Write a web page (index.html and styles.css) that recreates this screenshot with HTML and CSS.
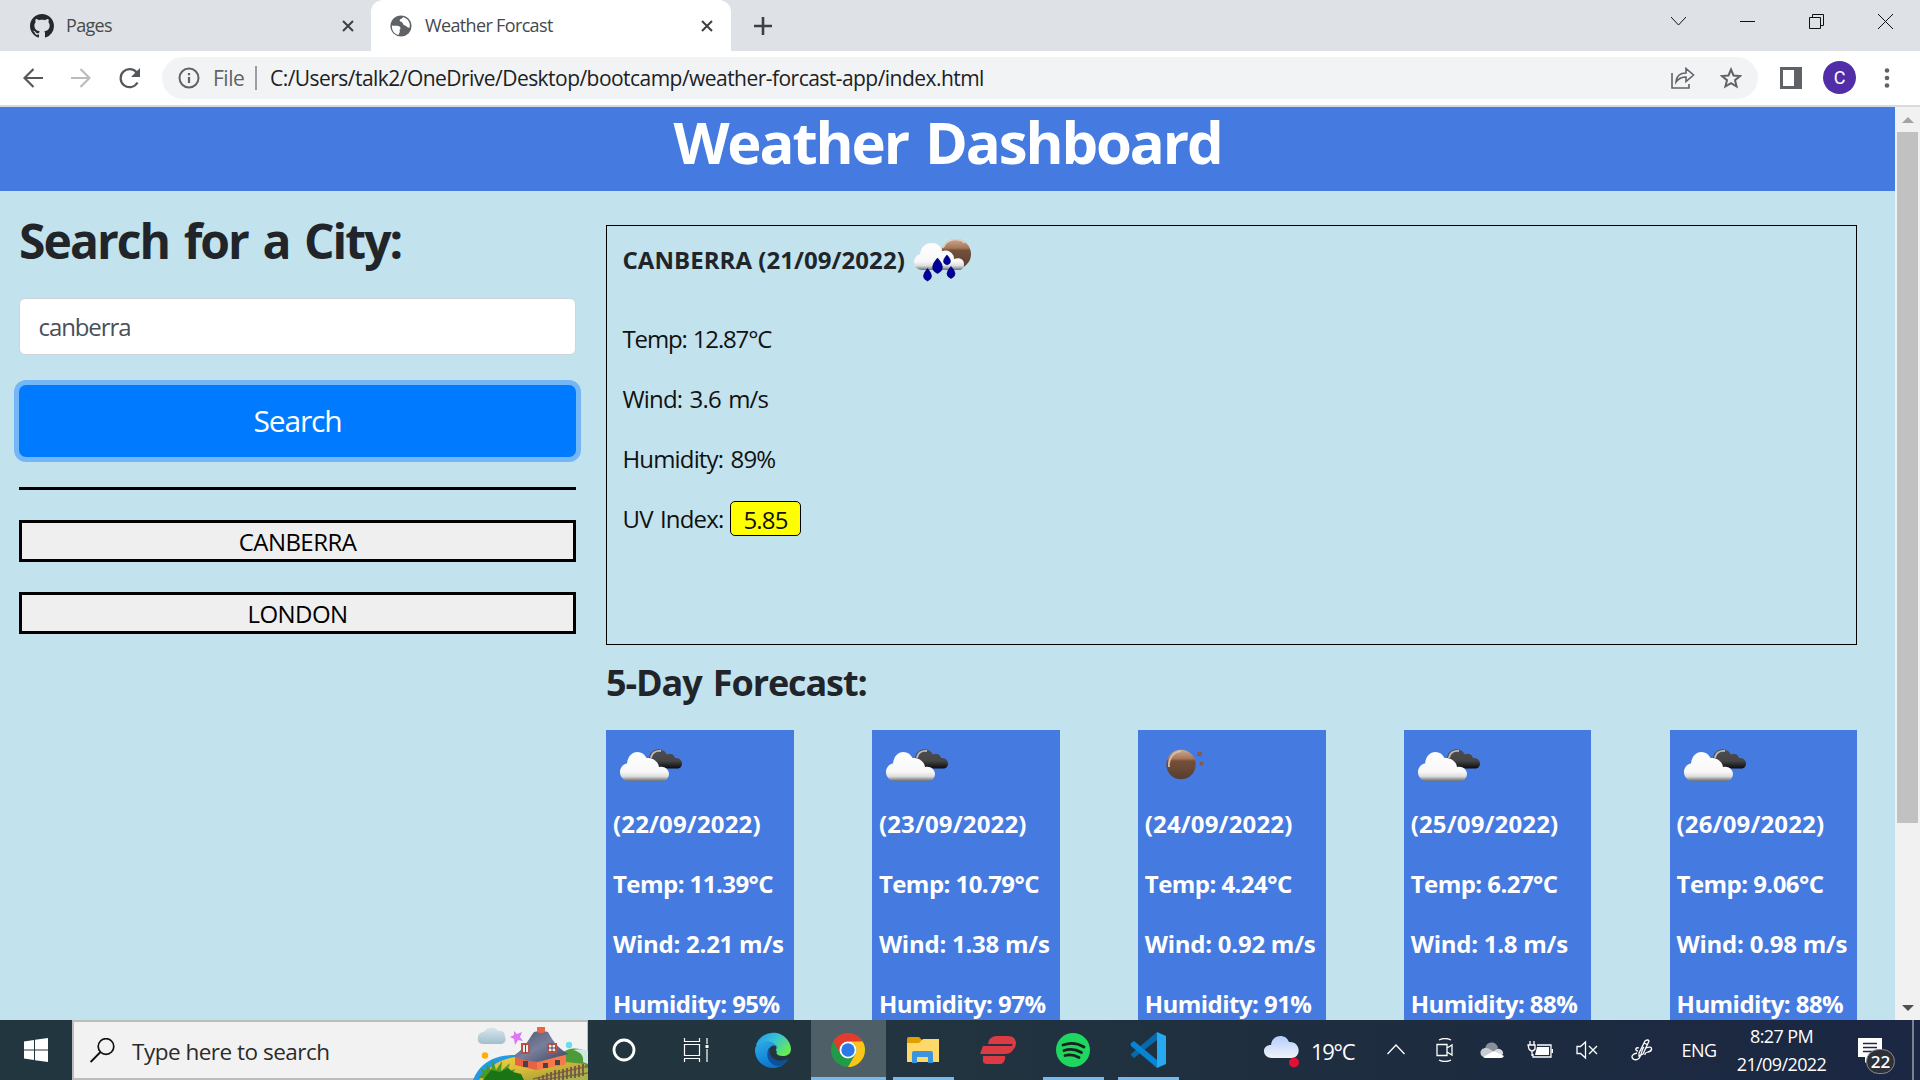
FILE: index.html
```html
<!DOCTYPE html>
<html lang="en">
<head>
<meta charset="utf-8">
<title>Weather Forcast</title>
<link rel="stylesheet" href="styles.css">
</head>
<body>
<svg class="defs" width="0" height="0" aria-hidden="true">
  <defs>
    <linearGradient id="white-cloud" x1="0" y1="0" x2="0" y2="1"><stop offset="0" stop-color="#fff"/><stop offset=".68" stop-color="#f8f8f8"/><stop offset=".84" stop-color="#dedede"/><stop offset="1" stop-color="#6b7077"/></linearGradient>
    <linearGradient id="dark-cloud" x1="0" y1="0" x2="0" y2="1"><stop offset="0" stop-color="#4d4d50"/><stop offset=".6" stop-color="#454547"/><stop offset="1" stop-color="#0c0c0e"/></linearGradient>
    <linearGradient id="moon" x1="0" y1="0" x2="0" y2="1"><stop offset="0" stop-color="#c9aa97"/><stop offset=".3" stop-color="#a87657"/><stop offset=".38" stop-color="#75503a"/><stop offset="1" stop-color="#573d31"/></linearGradient>
    <symbol id="clouds" viewBox="0 0 75 75">
      <path d="M36 33a9 9 0 0 1 17-8.500c3-1.500 7-.3 8 3.500 4-.5 7 2 7 5.500 0 3-2 5-5 5H42z" fill="url(#dark-cloud)"/>
      <path d="M37 28c.5-5 5-8 10-7" fill="none" stroke="#b9b9b9" stroke-width="1.800"/>
      <path d="M13 51c-4-1-7-4.500-7-9 0-4 3-8 7-8.500C14 26 18 22 23.500 22c4 0 7 2 9 6 7-.5 12 4 12.500 9 5-1.500 10 2 10 7 0 3-2 6-5 7z" fill="url(#white-cloud)"/>
    </symbol>
    <symbol id="clear-night" viewBox="0 0 75 75">
      <circle cx="35" cy="34.500" r="14.700" fill="url(#moon)"/>
      <path d="M23 37c-1-8 4-15 12-16" fill="none" stroke="#d8bba9" stroke-width="1.800"/>
      <path d="M51.500 22l2 1 2-1-.8 2 .8 2-2-.8-2 .8.800-2zM54 32l1.500.5 1.500-.5-.5 1.500.5 1.500-1.500-.5-1.500.5.5-1.500z" fill="#86594a" stroke="#86594a"/>
    </symbol>
    <symbol id="close" viewBox="0 0 12 12"><path d="M1 1l10 10M11 1L1 11" fill="none" stroke="#3c4043" stroke-width="2"/></symbol>
  </defs>
</svg>

<div class="screen">
  <header class="tabs">
    <div class="tab">
      <svg class="github" width="24" height="24" viewBox="0 0 16 16"><path fill="#24292e" d="M8 0C3.580 0 0 3.580 0 8c0 3.540 2.290 6.530 5.470 7.590.4.070.55-.17.55-.38 0-.19-.01-.82-.01-1.490-2.010.37-2.530-.49-2.690-.94-.09-.23-.48-.94-.82-1.130-.28-.15-.68-.52-.01-.53.63-.01 1.080.58 1.230.82.72 1.210 1.870.87 2.330.66.07-.52.28-.87.51-1.070-1.780-.2-3.640-.89-3.640-3.950 0-.87.31-1.590.82-2.150-.08-.2-.36-1.020.08-2.120 0 0 .67-.21 2.200.82.64-.18 1.320-.27 2-.27s1.360.09 2 .27c1.530-1.040 2.200-.82 2.200-.82.44 1.100.16 1.920.08 2.120.51.56.82 1.270.82 2.150 0 3.070-1.870 3.750-3.650 3.950.29.25.54.73.54 1.480 0 1.070-.01 1.930-.01 2.200 0 .21.15.46.55.38A8 8 0 0 0 16 8c0-4.420-3.580-8-8-8z"/></svg>
      <span class="tab-title pages">Pages</span>
      <svg width="12" height="12"><use href="#close"/></svg>
    </div>
    <div class="tab active">
      <svg width="22" height="22" viewBox="0 0 22 22"><circle cx="11" cy="11" r="10.600" fill="#5f6368"/><path d="M2 10.500c2 .8 6.500-.5 8 1.500 1.500 2-.8 2.500-.3 4 .6 1.500-.8 2-1.200 4C4 19 1.500 15 2 10.500zM13 2c-.3 2-3 1.500-3.300 3.300-.3 1.500 2.800 1.300 3 3 .3 1.800 2 1.800 3.300 2.700 1.600 1 2 2 3.500 1.700C21 8 18 3.500 13 2z" fill="#fff"/></svg>
      <span class="tab-title forcast">Weather Forcast</span>
      <svg width="12" height="12"><use href="#close"/></svg>
    </div>
    <svg class="new-tab" width="18" height="18" viewBox="0 0 18 18"><path d="M9 0v18M0 9h18" stroke="#3c4043" stroke-width="2.600"/></svg>
    <div class="window-controls">
      <svg width="15" height="15" viewBox="0 0 15 15"><path d="M0 3l7.500 8L15 3"/></svg>
      <svg width="15" height="15" viewBox="0 0 15 15"><path d="M0 7.500h15"/></svg>
      <svg width="15" height="15" viewBox="0 0 15 15"><path d="M.5 3.500h11v11H.5zM3.500 3.500v-3h11v11h-3"/></svg>
      <svg width="15" height="15" viewBox="0 0 15 15"><path d="M0 0l15 15M15 0L0 15"/></svg>
    </div>
  </header>

  <div class="toolbar">
    <svg class="nav" width="20" height="20" viewBox="0 0 20 20"><path d="M20 10H2M10.500 1L1.500 10l9 9"/></svg>
    <svg class="nav faded" width="20" height="20" viewBox="0 0 20 20"><path d="M0 10h18M9.500 1l9 9-9 9"/></svg>
    <svg class="nav" width="22" height="22" viewBox="0 0 22 22"><path d="M18.500 15.500A9 9 0 1 1 18 6"/><path class="solid" d="M21 1v9h-9z"/></svg>
    <div class="address">
      <svg width="22" height="22" viewBox="0 0 22 22"><circle cx="11" cy="11" r="9.500" fill="none" stroke="#5f6368" stroke-width="2"/><path d="M11 10v6M11 6v2.300" stroke="#5f6368" stroke-width="2.200"/></svg>
      <span class="scheme">File</span>
      <span class="divider"></span>
      <span class="url">C:/Users/talk2/OneDrive/Desktop/bootcamp/weather-forcast-app/index.html</span>
      <svg class="share" width="24" height="22" viewBox="0 0 24 22"><path d="M1 6v15h17v-4M5 15c.5-6 4-9 10-9V1.500l7.500 6.500-7.500 6.500V10c-5 0-7.500 1.500-10 5z" fill="none" stroke="#5f6368" stroke-width="1.600"/></svg>
      <svg width="22" height="22" viewBox="0 0 22 22"><path d="M11 2.500l2.500 6 6.500.5-5 4.200 1.600 6.300L11 16.200l-5.600 3.300L7 13.200 2 9l6.500-.5z" fill="none" stroke="#5f6368" stroke-width="2"/></svg>
    </div>
    <svg class="side-panel" width="22" height="22" viewBox="0 0 22 22"><path d="M0 0h22v22H0zM3 3v16h11V3z" fill="#5f6368" fill-rule="evenodd"/></svg>
    <span class="avatar">C</span>
    <svg width="6" height="22" viewBox="0 0 6 22"><g fill="#5f6368"><circle cx="3" cy="3.500" r="2.300"/><circle cx="3" cy="11" r="2.300"/><circle cx="3" cy="18.500" r="2.300"/></g></svg>
  </div>

  <div class="viewport">
    <main class="page">
      <h1 class="banner">Weather Dashboard</h1>
      <div class="columns">
        <aside class="sidebar">
          <h2 class="search-title">Search for a City:</h2>
          <div class="city-input"><span>canberra</span></div>
          <button class="search-button"><span>Search</span></button>
          <div class="rule"></div>
          <button class="history"><span>CANBERRA</span></button>
          <button class="history"><span>LONDON</span></button>
        </aside>
        <section class="results">
          <div class="current">
            <div class="current-title">
              <span>CANBERRA (21/09/2022)</span>
              <svg width="60" height="44" viewBox="0 0 60 44">
                <circle cx="43" cy="16" r="15" fill="url(#moon)"/>
                <path d="M30 10c4-9 15-11 22-5" fill="none" stroke="#e0d0c4" stroke-width="1.500"/>
                <path d="M9 32c-5 0-8-4-8-8s3-7 6-8C8 9 12 5 19 5c5 0 9 3 10 8 5-2 12 1 12 8 5-2 10 0 10 5 0 4-2 6-5 6z" fill="url(#white-cloud)"/>
                <g fill="#00009d" stroke="#000060" stroke-width=".6"><path d="M24.500 20q10 11 0 15.500-10-4.500 0-15.500zM34 17q7 7.500 0 10-7-2.500 0-10zM14.500 30.500q8 9 0 12.500-8-3.500 0-12.500zM38 28.500q8 8.500 0 12-8-3.500 0-12z"/></g>
              </svg>
            </div>
            <p class="reading now-temp">Temp: 12.87°C</p>
            <p class="reading">Wind: 3.6 m/s</p>
            <p class="reading">Humidity: 89%</p>
            <p class="reading uv-row"><span class="uv-label">UV Index:</span><span class="uv">5.85</span></p>
          </div>
          <h2 class="forecast-title">5-Day Forecast:</h2>
          <div class="forecast">
            <article class="day">
              <svg width="75" height="75"><use href="#clouds"/></svg>
              <p class="date">(22/09/2022)</p><p class="temp">Temp: 11.39°C</p><p class="wind">Wind: 2.21 m/s</p><p class="humidity">Humidity: 95%</p>
            </article>
            <article class="day">
              <svg width="75" height="75"><use href="#clouds"/></svg>
              <p class="date">(23/09/2022)</p><p class="temp">Temp: 10.79°C</p><p class="wind">Wind: 1.38 m/s</p><p class="humidity">Humidity: 97%</p>
            </article>
            <article class="day">
              <svg width="75" height="75"><use href="#clear-night"/></svg>
              <p class="date">(24/09/2022)</p><p class="temp">Temp: 4.24°C</p><p class="wind">Wind: 0.92 m/s</p><p class="humidity">Humidity: 91%</p>
            </article>
            <article class="day">
              <svg width="75" height="75"><use href="#clouds"/></svg>
              <p class="date">(25/09/2022)</p><p class="temp">Temp: 6.27°C</p><p class="wind">Wind: 1.8 m/s</p><p class="humidity">Humidity: 88%</p>
            </article>
            <article class="day">
              <svg width="75" height="75"><use href="#clouds"/></svg>
              <p class="date">(26/09/2022)</p><p class="temp">Temp: 9.06°C</p><p class="wind">Wind: 0.98 m/s</p><p class="humidity">Humidity: 88%</p>
            </article>
          </div>
        </section>
      </div>
    </main>
    <div class="scrollbar">
      <svg width="12" height="6" viewBox="0 0 12 6"><path d="M0 6l6-6 6 6z" fill="#a3a3a3"/></svg>
      <div class="thumb"></div>
      <svg class="down" width="12" height="6" viewBox="0 0 12 6"><path d="M0 0l6 6 6-6z" fill="#505050"/></svg>
    </div>
  </div>

  <footer class="taskbar">
    <div class="start"><svg width="24" height="24" viewBox="0 0 24 24"><path d="M0 3.500l10-1.600v9.600H0zM11 1.700L24 0v11.500H11zM0 12.500h10v9.600l-10-1.600zM11 12.500h13V24l-13-1.800z" fill="#fff"/></svg></div>
    <div class="search-box">
      <svg width="25" height="25" viewBox="0 0 25 25"><circle cx="16" cy="8.500" r="7.800" fill="none" stroke="#111" stroke-width="1.700"/><path d="M10.500 14L.6 24" stroke="#111" stroke-width="1.900"/></svg>
      <span class="search-hint">Type here to search</span>
      <svg class="cottage" width="115" height="54" viewBox="0 0 115 54">
        <defs>
          <linearGradient id="roof" x1="0" y1="0" x2="1" y2="1"><stop offset="0" stop-color="#50546f"/><stop offset=".5" stop-color="#777f9c"/><stop offset="1" stop-color="#3f435e"/></linearGradient>
          <linearGradient id="field" x1="0" y1="0" x2="1" y2="1"><stop offset="0" stop-color="#f0d53f"/><stop offset=".5" stop-color="#d9b738"/><stop offset="1" stop-color="#7d9a35"/></linearGradient>
          <linearGradient id="sky-cloud" x1="0" y1="0" x2="0" y2="1"><stop offset="0" stop-color="#d8e6ed"/><stop offset="1" stop-color="#a1bfcd"/></linearGradient>
        </defs>
        <path d="M0 54c6-15 18-25 42-25l8 10-40 15z" fill="#239ae6"/>
        <path d="M88 28c8-8 19-6 27-2v28H70z" fill="#4d9a3b"/>
        <path d="M100 24c8 2 11 6 10 12l5 2V25q-8-3-15-1z" fill="#cce9df"/>
        <path d="M6 54c9-13 19-20 36-23l70 7 3 16z" fill="url(#field)"/>
        <path d="M76 50l39-8v12H58z" fill="#a9b448"/>
        <path d="M5 52l5-5-3-5 6 3 1-7 4 6 2-10 3 10 6-9-1 10 9-8-3 9 8-3-2 5 9 2-1 4z" fill="#4c9a25"/>
        <path d="M10 54l8-10 9 2 8-4 5 4 8 2 3 6z" fill="#1b7413"/>
        <path d="M10 18c-4 0-6-3-5-7 0-3 3-5 6-5 2-5 12-6 14-1 5-1 7 2 7 6 2 4-1 7-4 7z" fill="url(#sky-cloud)"/>
        <path d="M41 5l3 3 5-2-2 5 3 4-5-1-3 5-1-6-4-2 4-2z" fill="#dd78f3"/>
        <circle cx="12" cy="29.500" r="3.200" fill="#ffae00"/><circle cx="96" cy="19" r="3.200" fill="#6cdce8"/>
        <path d="M42 31l22 3 29-5v9l-30 6-21-5z" fill="#e66345"/><path d="M64 35l29-6v9l-29 6z" fill="#f5794b"/>
        <path d="M61 6q7-2 14 0c4 7 8 15 20 22q-15 4-30 8-14-1-25-6C51 24 55 14 61 6z" fill="url(#roof)"/>
        <path d="M64 1h8v5q-4 2-8 0z" fill="#ed6643"/>
        <path d="M49 18h7v9h-7zM75 18h8v8h-8z" fill="#eee" stroke="#bb5144" stroke-width="2"/><path d="M52.500 18v9M79 18v8M75 22h8" stroke="#54465c"/>
        <path d="M50 35h5v6h-5zM70 37h5v5h-5zM82 34h5v5h-5z" fill="#4d3f43"/>
        <path d="M60 53l55-13M61 55l54-8" stroke="#8b6747" stroke-width="1.500"/>
        <path d="M66 54v-3m4 3v-5m4 5v-7m4 7v-8m4 8V44m4 10V44m4 10V43m4 10V42m4 10V41m4 11V40m4 11V39m4 11V38" stroke="#765547" stroke-width="1.800"/>
      </svg>
    </div>
    <div class="app cortana"><svg width="24" height="24" viewBox="0 0 24 24"><circle cx="12" cy="12" r="10" fill="none" stroke="#fff" stroke-width="2.800"/></svg></div>
    <div class="app task-view"><svg width="26" height="24" viewBox="0 0 26 24"><path d="M1.500 0v3.500h15V0M1.500 6.500h15v11h-15zM1.500 24v-3.500h15V24M24 0v6M24 11v13" fill="none" stroke="#fff" stroke-width="1.200"/><path d="M22.500 7h3v3h-3z" fill="#fff"/></svg></div>
    <div class="app">
      <svg width="36" height="36" viewBox="0 0 36 36">
        <defs><linearGradient id="edge-top" x1="0" y1="0" x2="1" y2=".6"><stop stop-color="#2295e6"/><stop offset=".5" stop-color="#35c1d8"/><stop offset="1" stop-color="#68ea54"/></linearGradient><linearGradient id="edge-side" x1="0" y1="0" x2=".6" y2="1"><stop stop-color="#31aee8"/><stop offset="1" stop-color="#0670cc"/></linearGradient></defs>
        <path d="M1 13A18 18 0 0 1 36 17c0 5-4 7.500-9 7-6-.5-6-3-5-5z" fill="url(#edge-top)"/>
        <path d="M0 17C2 7 18 6 23 16c-6-4-10 1-8 7 2 7 11 8 18 4-4 7-10 9-15 9C8 36-.5 28 0 17z" fill="url(#edge-side)"/>
        <path d="M14 16c-5 9 2 19 11 18 4-2 7-4 8-7-6 3-14 2-17-3-2-3-1-7 1-9z" fill="#124f98"/>
        <path d="M16 14.500c4-2.500 6 0 5.500 2-1 2.500-2 4.500 1 6.500-3 .5-7-1-8-4q-.5-3 1.500-4.500z" fill="#22363f"/>
      </svg>
    </div>
    <div class="app open current-app">
      <svg width="34" height="34" viewBox="0 0 34 34"><circle cx="17" cy="17" r="17" fill="#229b49"/><path d="M2.300 8.500A17 17 0 0 1 31.700 8.500H17A8.500 8.500 0 0 0 9.600 21.200z" fill="#e33b2e"/><path d="M31.700 8.500A17 17 0 0 1 17 34l7.400-12.800A8.500 8.500 0 0 0 17 8.500z" fill="#fdc519"/><circle cx="17" cy="17" r="8.500" fill="#fff"/><circle cx="17" cy="17" r="6.700" fill="#2c78e8"/></svg>
    </div>
    <div class="app open"><svg width="32" height="27" viewBox="0 0 32 27"><path d="M0 2q0-2 2-2h10l3 3v3H0z" fill="#dfa000"/><path d="M0 6h12l4-4h16v23H0z" fill="#ffd86a"/><path d="M5 26V16q0-2 2-2h17q2 0 2 2v10h-5v-6H10v6z" fill="#3b94df"/></svg></div>
    <div class="app"><svg width="36" height="28" viewBox="0 0 36 28"><path d="M9 4q3-4 8-4h11c9 0 10 9 5 14-2 3-5 4-8 4H0l3-8h28c2 0 2-2 0-2H8zM3 20h21q2 0 1 3-1 5-5 5H7q-5 0-4-5z" fill="#dc3b43"/></svg></div>
    <div class="app open"><svg width="34" height="34" viewBox="0 0 34 34"><circle cx="17" cy="17" r="17" fill="#1fd760"/><path d="M7 12q11-4 21 2M8 17.500q9-3 17.500 2M9 22.500q7-2 14 2" fill="none" stroke="#17221b" stroke-width="2.800" stroke-linecap="round"/></svg></div>
    <div class="app open"><svg width="36" height="36" viewBox="0 0 36 36"><path d="M1 23l3 3 23-18V0L1 22q-1 .5 0 1z" fill="#0869ad"/><path d="M1 11l3-2 23 19v8L1 14q-1-2 0-3z" fill="#0784d3"/><path d="M27 0l9 4v28l-9 4z" fill="#27a9f2"/></svg></div>

    <div class="tray">
      <div class="weather">
        <svg width="38" height="36" viewBox="0 0 38 36"><defs><linearGradient id="tray-cloud" x1="0" y1="0" x2="0" y2="1"><stop stop-color="#b3cdfa"/><stop offset="1" stop-color="#f0f3f8"/></linearGradient></defs><path d="M8 26c-10 0-11-13-1-13C8 2 22 1 25 10c12-1 13 16 2 16z" fill="url(#tray-cloud)"/><circle cx="30" cy="30.500" r="5" fill="#df1235"/></svg>
        <span class="degrees">19°C</span>
      </div>
      <div class="cell"><svg width="18" height="18" viewBox="0 0 18 18"><path d="M.5 13L9 4l8.500 9"/></svg></div>
      <div class="cell camera"><svg width="18" height="24" viewBox="0 0 18 24"><path d="M3 2q6-3 12 0M3 22q6 3 12 0M1 6.500h10v11H1zM11 10l5-3v10l-5-3"/></svg></div>
      <div class="cell"><svg width="24" height="18" viewBox="0 0 24 18"><path class="fill" d="M5 8C6-1 17 0 18 7l-6 5z" fill="#87909a"/><path class="fill" d="M4 16c-5-1-5-9 2-9 3 0 5 2 8 4z" fill="#c8ccd0"/><path class="fill" d="M14 11c2-6 10-3 9 2l-3 3z" fill="#d8dade"/><path class="fill" d="M3 16l11-6 10 5q-1 2-3 2H5z" fill="#fff"/></svg></div>
      <div class="cell"><svg width="26" height="18" viewBox="0 0 26 18"><path d="M10 4h14v12H6v-3M25.500 8v4M3 0v4M7 0v4M1 4h7v4q-3 4-6 0zM5 10v5"/><path class="fill" d="M10 6h12v8H8z" fill="#fff"/></svg></div>
      <div class="cell mute"><svg width="22" height="20" viewBox="0 0 22 20"><path d="M1 6.500h3.500L9.500 2v16l-5-4.500H1zM13 6l8 8M21 6l-8 8"/></svg></div>
      <div class="cell pen"><svg width="22" height="22" viewBox="0 0 22 22"><path d="M8 14l6-12q3-2 4 0l-6 13-4 2zM13 4l4 2M8 9c-3-1-5 2-1 3M6 14c-9 2-4 9 1 6 4-2 3-10 6-12M15 9c7-3 7 3 2 4-3 1-3 1-3 3"/></svg></div>
      <div class="cell lang">ENG</div>
      <div class="clock"><span class="time">8:27 PM</span><span class="today">21/09/2022</span></div>
      <div class="notes">
        <svg width="24" height="25" viewBox="0 0 24 25"><path d="M0 0h24v19H13l-6 6v-6H0z" fill="#fff"/><path d="M5 5.500h14M5 9.500h14M5 13.500h10" stroke="#1d2940" stroke-width="1.300"/></svg>
        <span class="count">22</span>
      </div>
    </div>
  </footer>
</div>
</body>
</html>
```
FILE: styles.css
```css
* { box-sizing: border-box; }
body { margin: 0; font-family: "Open Sans", "Noto Sans", sans-serif; }
h1, h2, p { margin: 0; }
svg { display: block; flex: none; }
button { font-family: inherit; padding: 0; }
.defs { position: absolute; }
.screen { display: flex; flex-direction: column; width: 1920px; height: 1080px; overflow: hidden; white-space: nowrap; }

/* Browser tabs */
.tabs { display: flex; align-items: center; height: 51px; background: #dee1e6; }
.tab { display: flex; align-items: center; width: 371px; height: 51px; padding: 0 17px 0 30px; }
.tab.active { width: 360px; padding: 0 18px 0 19px; background: #fff; border-radius: 12px 12px 0 0; }
.tab-title { flex: 1; padding-bottom: 1px; font-size: 18px; color: #45494d; }
.pages { padding-left: 12px; letter-spacing: -0.7px; }
.forcast { padding-left: 13px; letter-spacing: -0.65px; }
.new-tab { margin-left: 23px; }
.window-controls { display: flex; gap: 54px; height: 42px; align-items: center; align-self: flex-start; margin-left: auto; padding-right: 27px; }
.window-controls path { fill: none; stroke: #111; stroke-width: 1; }

/* Address bar */
.toolbar { display: flex; align-items: center; height: 56px; padding: 0 30px 1px 23px; background: #fff; border-bottom: 2px solid #d8dadd; }
.nav { margin-right: 28px; fill: none; stroke: #54585d; stroke-width: 2.2; }
.nav + .nav + .nav { margin-right: 21px; }
.nav.faded { stroke: #babcbe; }
.nav .solid { fill: #54585d; stroke: none; }
.address { display: flex; align-items: center; width: 1596px; height: 42px; padding: 0 16px 0 16px; background: #f1f3f4; border-radius: 21px; font-size: 21px; }
.scheme { width: 42px; margin-left: 13px; color: #5f6368; letter-spacing: -0.5px; }
.divider { width: 2px; height: 24px; background: #9a9da1; }
.url { flex: 1; margin-left: 13px; color: #202124; letter-spacing: -0.54px; }
.share { margin-right: 25px; }
.side-panel { margin-left: 22px; }
.avatar { width: 33px; height: 33px; margin: 0 28px 0 21px; border-radius: 50%; background: #512da8; color: #fff; font: 18px/33px Roboto, sans-serif; text-align: center; }

/* Page */
.viewport { display: flex; height: 913px; }
.page { width: 1895px; height: 913px; background: #c2e2ed; }
.banner { height: 84px; background: #457be0; color: #fff; font-size: 58px; font-weight: 700; line-height: 69px; text-align: center; letter-spacing: -2.1px; word-spacing: 4px; }
.columns { display: flex; gap: 30px; padding: 0 37.6px 0 19px; }
.sidebar { display: flex; flex-direction: column; gap: 30px; width: 557px; padding-top: 19px; }
.search-title { height: 58px; font-size: 48px; line-height: 61px; color: #212529; letter-spacing: -1.95px; word-spacing: 4px; }
.city-input { height: 57px; padding: 9px 18.5px; border: 1px solid #ced4da; border-radius: 6px; background: #fff; color: #495057; font-size: 24px; line-height: 38px; letter-spacing: -1.1px; }
.search-button { height: 72px; border: 0; border-radius: 7px; background: #007bff; box-shadow: 0 0 0 5px #75b7f6; color: #fff; font-size: 30px; line-height: 68px; letter-spacing: -1.2px; }
.rule { height: 3px; background: #000; }
.history { height: 42px; padding-top: 1px; border: 3px solid #000; background: #efefef; color: #000; font-size: 24px; line-height: 35px; letter-spacing: -0.55px; }
.results { width: 1251.4px; padding-top: 34px; }
.current { height: 420px; padding: 16px 16px 16px 15.500px; border: 1px solid #000; font-size: 24px; line-height: 36px; color: #111; }
.current-title { display: flex; align-items: center; gap: 8px; height: 36px; margin-bottom: 42px; font-weight: 700; color: #212529; }
.current-title span { width: 282px; letter-spacing: 0.05px; }
.reading { height: 36px; margin-bottom: 24px; padding-top: 1px; letter-spacing: -0.85px; word-spacing: 2px; }
.now-temp { letter-spacing: -1.15px; word-spacing: 1px; }
.uv-row { display: flex; padding-top: 0; }
.uv-label { width: 107px; padding-top: 1px; }
.uv { width: 71px; height: 35px; margin-top: 1px; padding-left: 1px; border: 1px solid #000; border-radius: 5px; background: #ff0; line-height: 36px; text-align: center; }
.forecast-title { height: 43px; margin: 15px 0 27px; font-size: 36px; line-height: 46px; color: #212529; letter-spacing: -1.1px; word-spacing: 3px; }
.forecast { display: flex; justify-content: space-between; }
.day { width: 187.8px; height: 290px; padding: 0 7px; background: #457be0; color: #fff; font-size: 24px; font-weight: 700; line-height: 38px; }
.day svg { margin-left: 1px; }
.day p { height: 36px; margin-bottom: 24px; letter-spacing: -0.55px; }
.day .date { letter-spacing: 0.15px; }
.day .wind { letter-spacing: -0.25px; }
.scrollbar { display: flex; flex-direction: column; align-items: center; width: 25px; padding: 10px 0 9px; background: #f1f1f1; }
.thumb { width: 21px; height: 691px; margin-top: 9px; background: #c1c1c1; }
.down { margin-top: auto; }

/* Taskbar */
.taskbar { position: relative; display: flex; height: 60px; background: linear-gradient(90deg, #22363f 0%, #22353f 45%, #1e2d3f 70%, #1b2743 100%); color: #fff; }
.start { display: flex; align-items: center; justify-content: center; width: 72px; }
.search-box { display: flex; align-items: center; width: 516px; height: 60px; padding-left: 16px; border: 2px solid #bcbcbc; border-right-width: 1px; background: #f2f2f2; color: #2b2b2b; font-size: 22.500px; }
.search-hint { flex: 1; margin-left: 17px; padding-top: 2px; letter-spacing: -0.5px; }
.cottage { margin-right: -1px; align-self: flex-end; margin-bottom: -2px; }
.app { display: flex; align-items: center; justify-content: center; width: 75px; height: 60px; padding-right: 1px; background-repeat: no-repeat; background-position: center bottom; }
.cortana { width: 73px; padding-right: 2px; }
.task-view { padding-right: 6px; }
.open { background-image: linear-gradient(#76b9ed, #76b9ed); background-size: 61px 3px; }
.current-app { background-color: #4e5f67; background-size: 75px 3px; }
.tray { display: flex; flex: 1; justify-content: flex-end; border-right: 2px solid #7a8290; margin-right: 6px; }
.weather { display: flex; align-items: center; width: 108px; }
.degrees { margin-left: 9px; padding-top: 2px; font-size: 22px; letter-spacing: -1.3px; }
.cell { display: flex; align-items: center; justify-content: center; width: 48px; }
.cell path { fill: none; stroke: #fff; stroke-width: 1.3; }
.cell path.fill { fill: revert-layer; stroke: none; }
.cell.camera { padding-left: 2px; }
.cell.mute { width: 46px; }
.cell.pen { width: 64px; }
.lang { width: 50px; font-size: 18px; letter-spacing: -0.6px; }
.clock { display: flex; flex-direction: column; align-items: center; justify-content: center; width: 116px; padding-right: 1px; font-size: 18px; line-height: 28px; letter-spacing: -0.6px; }
.notes { position: relative; width: 72px; padding: 18px 0 0 18px; }
.count { position: absolute; left: 26px; top: 29px; width: 29px; height: 25px; border: 1px solid #858b93; border-radius: 13px; background: #2e3238; font-size: 17px; font-weight: 600; line-height: 23px; text-align: center; }
```
